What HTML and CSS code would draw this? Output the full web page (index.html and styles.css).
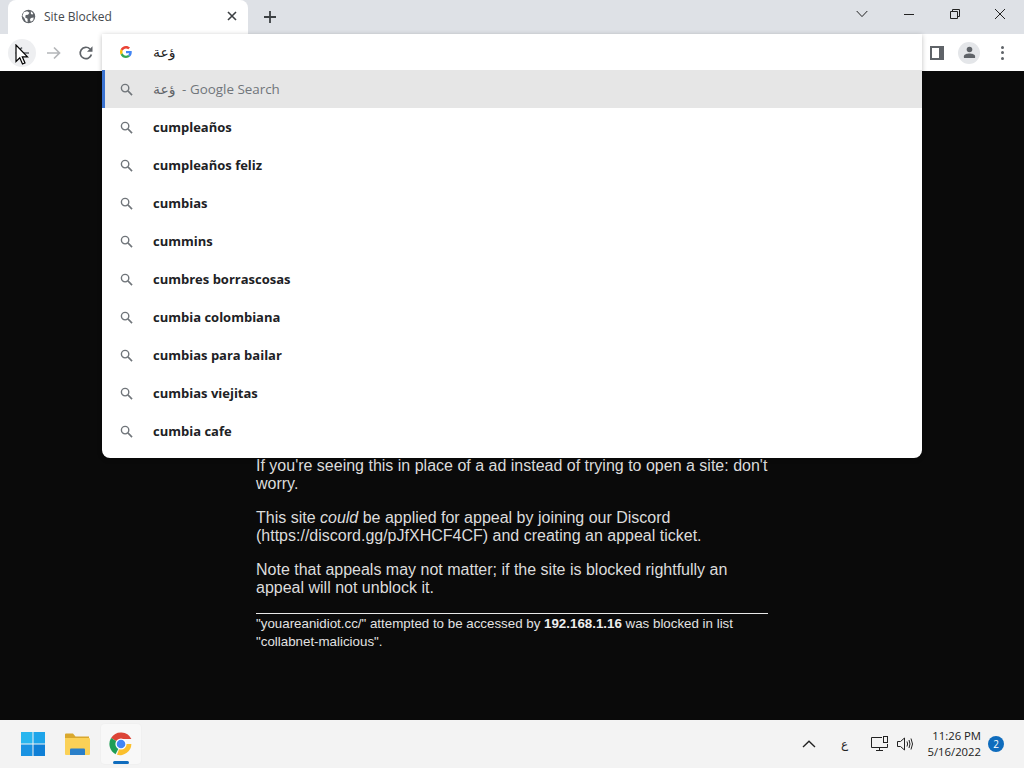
FILE: index.html
```html
<!DOCTYPE html>
<html lang="en">
<head>
<meta charset="utf-8">
<title>Site Blocked</title>
<link rel="stylesheet" href="styles.css">
</head>
<body>
<div class="screen">
  <header class="tabstrip">
    <div class="tab">
      <svg class="tab-globe" viewBox="0 0 16 16"><circle cx="8" cy="8" r="7.2" fill="#5f6368"/><path d="M3 3.5 6.5 2.5 9 4 7.5 6 5 6.500 4.500 9 7 10.500 7 14 5 13 3.500 9.500 1.500 7.500ZM10.500 9.500 13.500 9 13 12 10.500 13.500 9.500 11.500Z" fill="#fff"/><path d="M10.500 2.500 13 4.500 12 6 10.500 5Z" fill="#fff"/></svg>
      <span class="tab-title">Site Blocked</span>
      <svg class="tab-close" viewBox="0 0 10 10"><path d="M1 1 9 9M9 1 1 9" stroke="#3c4043" stroke-width="1.600" fill="none"/></svg>
    </div>
    <svg class="new-tab" viewBox="0 0 12 12"><path d="M6 0V12M0 6H12" stroke="#3c4043" stroke-width="1.800" fill="none"/></svg>
    <div class="window-controls">
      <svg class="wc wc-chevron" viewBox="0 0 12 8"><path d="M.7 1 6 6.600 11.300 1" stroke="#222" stroke-width="1" fill="none"/></svg>
      <svg class="wc wc-min" viewBox="0 0 12 12"><path d="M1 6.500H11" stroke="#222" stroke-width="1" fill="none"/></svg>
      <svg class="wc wc-max" viewBox="0 0 12 12"><path d="M1.500 3.500H8.500V10.500H1.500ZM3.500 3.500V1.500H10.500V8.500H8.500" stroke="#222" stroke-width="1" fill="none"/></svg>
      <svg class="wc wc-close" viewBox="0 0 12 12"><path d="M1 1 11 11M11 1 1 11" stroke="#222" stroke-width="1" fill="none"/></svg>
    </div>
  </header>

  <nav class="toolbar">
    <div class="nav-left">
      <span class="nav-btn nav-btn-active">
        <svg class="nav-icon" viewBox="0 0 16 16"><path d="M15 8H2.500M8 2.500 2.500 8 8 13.500" stroke="#5f6368" stroke-width="1.700" fill="none"/></svg>
      </span>
      <span class="nav-btn">
        <svg class="nav-icon" viewBox="0 0 16 16"><path d="M1 8H13.500M8 2.500 13.500 8 8 13.500" stroke="#b4b6b9" stroke-width="1.700" fill="none"/></svg>
      </span>
      <span class="nav-btn">
        <svg class="nav-icon" viewBox="0 0 16 16"><path d="M13.400 9.500A5.700 5.700 0 1 1 12 4" stroke="#5f6368" stroke-width="1.700" fill="none"/><path d="M14.500 1.300V6.800H9Z" fill="#5f6368"/></svg>
      </span>
    </div>
    <div class="nav-right">
      <svg class="side-panel" viewBox="0 0 14 14"><path d="M0 0H14V14H0ZM2 2V12H9V2Z" fill="#5f6368" fill-rule="evenodd"/></svg>
      <span class="avatar">
        <svg viewBox="0 0 14 14" class="avatar-icon"><circle cx="7" cy="3.800" r="3" fill="#5f6368"/><path d="M1 13V11C1 8.800 4.500 8 7 8S13 8.800 13 11V13Z" fill="#5f6368"/></svg>
      </span>
      <span class="kebab"><i></i><i></i><i></i></span>
    </div>
  </nav>

  <main class="page">
    <div class="notice">
      <p>If you're seeing this in place of a ad instead of trying to open a site: don't worry.</p>
      <p>This site <em>could</em> be applied for appeal by joining our Discord (https://discord.gg/pJfXHCF4CF) and creating an appeal ticket.</p>
      <p>Note that appeals may not matter; if the site is blocked rightfully an appeal will not unblock it.</p>
      <hr class="rule">
      <p class="small">"youareanidiot.cc/" attempted to be accessed by <strong>192.168.1.16</strong> was blocked in list "collabnet-malicious".</p>
    </div>
  </main>

  <footer class="taskbar">
    <div class="task-apps">
      <span class="task-app">
        <svg class="task-icon" viewBox="0 0 24 24"><rect width="11.500" height="11.500" fill="#29b6ef"/><rect x="12.500" width="11.500" height="11.500" fill="#1ea5ea"/><rect y="12.500" width="11.500" height="11.500" fill="#1a93e2"/><rect x="12.500" y="12.500" width="11.500" height="11.500" fill="#0f7fd6"/></svg>
      </span>
      <span class="task-app">
        <svg class="task-icon task-folder" viewBox="0 0 25 24"><path d="M0 2.500Q0 1.500 1 1.500H8L10.500 4.500H24V8H0Z" fill="#d9a82e"/><path d="M0 6H24Q25 6 25 7V22Q25 23 24 23H1Q0 23 0 22Z" fill="#fbd157"/><path d="M5 23V17.500Q5 16.500 6 16.500H19Q20 16.500 20 17.500V23Z" fill="#2a7fc9"/></svg>
      </span>
      <span class="task-app task-app-active">
        <svg class="task-icon" viewBox="0 0 24 24"><path d="M12 12 2.100 6.100A11.500 11.500 0 0 1 22.400 7H12Z" fill="#dc4437"/><path d="M12 12 6.500 22.200A11.500 11.500 0 0 1 2.100 6.100Z" fill="#1f9d55"/><path d="M12 12H22.400A11.500 11.500 0 0 1 8 22.800Z" fill="#fbc02d"/><circle cx="12" cy="12" r="5.600" fill="#fff"/><circle cx="12" cy="12" r="4.300" fill="#4285f4"/></svg>
        <span class="active-bar"></span>
      </span>
    </div>
    <div class="tray">
      <svg class="tray-up" viewBox="0 0 14 8"><path d="M1 7 7 1.300 13 7" stroke="#222" stroke-width="1.400" fill="none"/></svg>
      <span class="tray-lang">ع</span>
      <svg class="tray-net" viewBox="0 0 18 16"><path d="M11 1.500H.500V11.500H16.500V8M5 14.500H12M8.500 11.500V14.500" stroke="#222" stroke-width="1" fill="none"/><rect x="12.500" y=".5" width="4" height="6" fill="#f3f3f3" stroke="#222"/></svg>
      <svg class="tray-sound" viewBox="0 0 17 14"><path d="M.500 4.500H3.500L7.500 1V13L3.500 9.500H.500ZM10 4.500Q11.200 7 10 9.500M12 3Q14 7 12 11M14 1.500Q17 7 14 12.500" stroke="#222" stroke-width="1" fill="none"/></svg>
      <div class="clock"><span>11:26 PM</span><span>5/16/2022</span></div>
      <span class="badge">2</span>
    </div>
  </footer>

  <section class="omnibox">
    <div class="omni-input">
      <svg class="g-logo" viewBox="0 0 48 48"><path fill="#ea4335" d="M24 9.500c3.500 0 6.700 1.200 9.200 3.600l6.900-6.900C35.900 2.400 30.500 0 24 0 14.600 0 6.500 5.400 2.600 13.200l8 6.200C12.500 13.700 17.800 9.500 24 9.500z"/><path fill="#4285f4" d="M47 24.500c0-1.600-.1-3.100-.4-4.500H24v9h12.900c-.6 3-2.200 5.500-4.700 7.200l7.700 6c4.500-4.200 7.100-10.300 7.100-17.700z"/><path fill="#fbbc05" d="M10.500 28.600c-.5-1.400-.8-3-.8-4.600s.3-3.200.8-4.600l-8-6.200C.9 16.500 0 20.100 0 24s.9 7.500 2.600 10.800l7.900-6.200z"/><path fill="#34a853" d="M24 48c6.500 0 11.900-2.100 15.900-5.800l-7.700-6c-2.200 1.400-4.900 2.300-8.200 2.300-6.200 0-11.500-4.200-13.400-9.900l-8 6.200C6.500 42.600 14.600 48 24 48z"/></svg>
      <span class="omni-text">ؤعة</span>
    </div>
    <ul class="suggest-list">
      <li class="suggest suggest-selected">
        <svg class="search" viewBox="0 0 14 14"><circle cx="5.500" cy="5.500" r="4" stroke="#70757a" stroke-width="1.500" fill="none"/><path d="M8.500 8.500 13 13" stroke="#70757a" stroke-width="1.700"/></svg>
        <span class="s-query">ؤعة</span><span class="s-muted">&nbsp;- Google Search</span>
      </li>
      <li class="suggest"><svg class="search" viewBox="0 0 14 14"><circle cx="5.500" cy="5.500" r="4" stroke="#70757a" stroke-width="1.500" fill="none"/><path d="M8.500 8.500 13 13" stroke="#70757a" stroke-width="1.700"/></svg><b>cumpleaños</b></li>
      <li class="suggest"><svg class="search" viewBox="0 0 14 14"><circle cx="5.500" cy="5.500" r="4" stroke="#70757a" stroke-width="1.500" fill="none"/><path d="M8.500 8.500 13 13" stroke="#70757a" stroke-width="1.700"/></svg><b>cumpleaños feliz</b></li>
      <li class="suggest"><svg class="search" viewBox="0 0 14 14"><circle cx="5.500" cy="5.500" r="4" stroke="#70757a" stroke-width="1.500" fill="none"/><path d="M8.500 8.500 13 13" stroke="#70757a" stroke-width="1.700"/></svg><b>cumbias</b></li>
      <li class="suggest"><svg class="search" viewBox="0 0 14 14"><circle cx="5.500" cy="5.500" r="4" stroke="#70757a" stroke-width="1.500" fill="none"/><path d="M8.500 8.500 13 13" stroke="#70757a" stroke-width="1.700"/></svg><b>cummins</b></li>
      <li class="suggest"><svg class="search" viewBox="0 0 14 14"><circle cx="5.500" cy="5.500" r="4" stroke="#70757a" stroke-width="1.500" fill="none"/><path d="M8.500 8.500 13 13" stroke="#70757a" stroke-width="1.700"/></svg><b>cumbres borrascosas</b></li>
      <li class="suggest"><svg class="search" viewBox="0 0 14 14"><circle cx="5.500" cy="5.500" r="4" stroke="#70757a" stroke-width="1.500" fill="none"/><path d="M8.500 8.500 13 13" stroke="#70757a" stroke-width="1.700"/></svg><b>cumbia colombiana</b></li>
      <li class="suggest"><svg class="search" viewBox="0 0 14 14"><circle cx="5.500" cy="5.500" r="4" stroke="#70757a" stroke-width="1.500" fill="none"/><path d="M8.500 8.500 13 13" stroke="#70757a" stroke-width="1.700"/></svg><b>cumbias para bailar</b></li>
      <li class="suggest"><svg class="search" viewBox="0 0 14 14"><circle cx="5.500" cy="5.500" r="4" stroke="#70757a" stroke-width="1.500" fill="none"/><path d="M8.500 8.500 13 13" stroke="#70757a" stroke-width="1.700"/></svg><b>cumbias viejitas</b></li>
      <li class="suggest"><svg class="search" viewBox="0 0 14 14"><circle cx="5.500" cy="5.500" r="4" stroke="#70757a" stroke-width="1.500" fill="none"/><path d="M8.500 8.500 13 13" stroke="#70757a" stroke-width="1.700"/></svg><b>cumbia cafe</b></li>
    </ul>
  </section>

  <svg class="cursor" viewBox="0 0 14 22"><path d="M1 1V17.500L4.800 13.800 7.500 20 10 19 7.300 12.800H12.500Z" fill="#fff" stroke="#000" stroke-width="1.200"/></svg>
</div>
</body>
</html>
```
FILE: styles.css
```css
* { box-sizing: border-box; }
html, body { margin: 0; height: 100%; overflow: hidden; }
body { font-family: "Open Sans", "DejaVu Sans", sans-serif; background: #0a0a0a; }
.screen { position: relative; width: 1024px; height: 768px; display: flex; flex-direction: column; }

.tabstrip { height: 34px; flex: none; background: #dee1e6; display: flex; align-items: flex-start; padding-left: 8px; }
.tab { width: 240px; height: 34px; background: #fff; border-radius: 8px 8px 0 0; display: flex; align-items: center; padding: 0 11px 2px 13px; margin-right: 16px; }
.tab-globe { width: 15px; height: 15px; flex: none; margin-right: 8px; }
.tab-title { flex: 1; font-size: 12px; color: #45494d; }
.tab-close { width: 10px; height: 10px; flex: none; }
.new-tab { width: 12px; height: 12px; margin-top: 11px; flex: none; }
.window-controls { margin-left: auto; display: flex; align-items: center; height: 28px; }
.wc { width: 12px; height: 12px; margin-right: 34px; flex: none; }
.wc-chevron { height: 8px; margin-right: 35px; }
.wc-max { margin-right: 33px; }
.wc-close { margin-right: 18px; }

.toolbar { height: 37px; flex: none; background: #fff; display: flex; align-items: center; justify-content: space-between; padding: 0 14px 0 8px; }
.nav-left { display: flex; align-items: center; gap: 4px; }
.nav-btn { width: 28px; height: 28px; border-radius: 50%; display: flex; align-items: center; justify-content: center; }
.nav-btn-active { background: #eeeff1; }
.nav-icon { width: 16px; height: 16px; }
.nav-right { display: flex; align-items: center; }
.side-panel { width: 14px; height: 14px; margin-right: 14px; }
.avatar { width: 22px; height: 22px; border-radius: 50%; background: #e4e6e9; display: flex; align-items: center; justify-content: center; margin-right: 21px; }
.avatar-icon { width: 13px; height: 13px; }
.kebab { display: flex; flex-direction: column; gap: 2.500px; width: 3px; margin-right: 6px; }
.kebab i { width: 3px; height: 3px; border-radius: 50%; background: #5f6368; display: block; }

.page { flex: 1; min-height: 0; background: #0a0a0a; color: #dcdcdc; font-family: "Liberation Sans", Arial, sans-serif; padding-top: 386px; display: flex; justify-content: center; }
.notice { width: 512px; font-size: 16px; line-height: 18px; }
.notice p { margin: 0 0 16px; }
.rule { border: 0; height: 1px; background: #e8e8e8; margin: 0 0 1px; }
.notice .small { font-size: 13.330px; line-height: 18px; margin: 0; color: #e2e2e2; }
.small strong { color: #eee; }

.taskbar { height: 48px; flex: none; background: #f3f3f3; display: flex; justify-content: space-between; align-items: center; padding-left: 13px; }
.task-apps { display: flex; align-items: center; gap: 4px; }
.task-app { position: relative; width: 40px; height: 40px; display: flex; align-items: center; justify-content: center; border-radius: 4px; }
.task-app-active { background: #f8f8f8; box-shadow: 0 0 0 1px #f0f0f0; }
.task-icon { width: 24px; height: 24px; }
.task-folder { width: 25px; }
.active-bar { position: absolute; left: 12px; bottom: 0; width: 16px; height: 3px; border-radius: 2px; background: #0f6cbd; }
.tray { display: flex; align-items: center; color: #222; }
.tray-up { width: 14px; height: 8px; margin-right: 24px; }
.tray-lang { font-size: 12px; font-family: "DejaVu Sans", sans-serif; width: 8px; margin-right: 23px; text-align: center; }
.tray-net { width: 18px; height: 16px; margin-right: 8px; }
.tray-sound { width: 17px; height: 14px; margin-right: 13px; }
.clock { display: flex; flex-direction: column; align-items: flex-end; font-size: 11.300px; line-height: 16px; color: #222; }
.badge { width: 16px; height: 16px; border-radius: 50%; background: #0f6cbd; color: #fff; font-size: 10px; line-height: 16px; text-align: center; margin: 0 20px 0 7px; }

.omnibox { position: absolute; left: 102px; top: 34px; width: 820px; height: 424px; background: #fff; border-radius: 0 0 8px 8px; overflow: hidden; box-shadow: 0 1px 5px rgba(0,0,0,.25); }
.omni-input { height: 36px; display: flex; align-items: center; padding-left: 18px; }
.g-logo { width: 12px; height: 12px; margin-right: 21px; }
.omni-text { font-size: 14px; color: #222; font-family: "DejaVu Sans", sans-serif; }
.suggest-list { list-style: none; margin: 0; padding: 0; }
.suggest { height: 38px; display: flex; align-items: center; padding-left: 18px; font-size: 13px; color: #202124; }
.suggest b { font-weight: 700; }
.search { width: 13px; height: 13px; margin-right: 20px; flex: none; }
.suggest-selected { background: #e6e6e6; box-shadow: inset 3px 0 0 #3b73d1; }
.s-query { font-family: "DejaVu Sans", sans-serif; font-size: 14px; color: #5f6368; }
.s-muted { color: #70757a; font-size: 13.400px; margin-left: 3px; }
.cursor { position: absolute; left: 15px; top: 44px; width: 14px; height: 22px; }
```
